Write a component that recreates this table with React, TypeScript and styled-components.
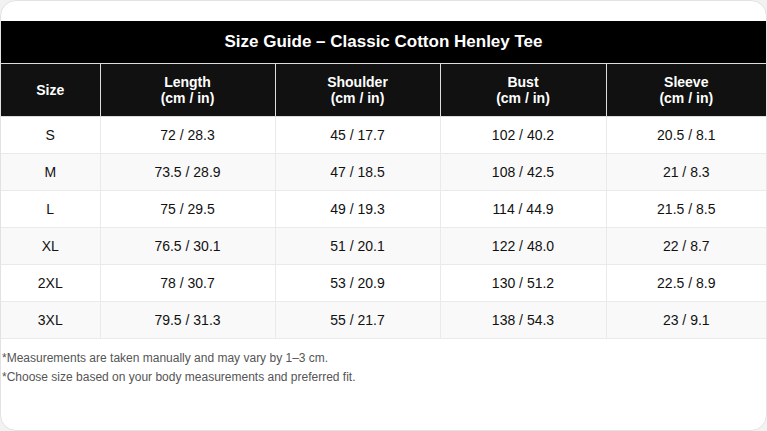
import React from 'react';
import styled, { createGlobalStyle } from 'styled-components';

const GlobalStyle = createGlobalStyle`
  html, body {
    margin: 0;
    padding: 0;
    background: #f2f2f2;
  }
  * {
    box-sizing: border-box;
  }
`;

type SizeRow = {
  size: string;
  length: string;
  shoulder: string;
  bust: string;
  sleeve: string;
};

const rows: SizeRow[] = [
  { size: 'S', length: '72 / 28.3', shoulder: '45 / 17.7', bust: '102 / 40.2', sleeve: '20.5 / 8.1' },
  { size: 'M', length: '73.5 / 28.9', shoulder: '47 / 18.5', bust: '108 / 42.5', sleeve: '21 / 8.3' },
  { size: 'L', length: '75 / 29.5', shoulder: '49 / 19.3', bust: '114 / 44.9', sleeve: '21.5 / 8.5' },
  { size: 'XL', length: '76.5 / 30.1', shoulder: '51 / 20.1', bust: '122 / 48.0', sleeve: '22 / 8.7' },
  { size: '2XL', length: '78 / 30.7', shoulder: '53 / 20.9', bust: '130 / 51.2', sleeve: '22.5 / 8.9' },
  { size: '3XL', length: '79.5 / 31.3', shoulder: '55 / 21.7', bust: '138 / 54.3', sleeve: '23 / 9.1' },
];

const columns = [
  { label: 'Size', unit: false, width: 99 },
  { label: 'Length', unit: true, width: 175 },
  { label: 'Shoulder', unit: true, width: 165 },
  { label: 'Bust', unit: true, width: 166 },
  { label: 'Sleeve', unit: true, width: 160 },
];

const Card = styled.div`
  width: 767px;
  height: 431px;
  background: #fff;
  border: 1px solid #e2e2e2;
  border-radius: 16px;
  padding: 20px 0 0;
  overflow: hidden;
  font-family: 'Liberation Sans', Arial, sans-serif;
`;

const Table = styled.table`
  width: 100%;
  border-collapse: collapse;
  table-layout: fixed;
`;

const Title = styled.th`
  background: #000;
  color: #fff;
  font-size: 17px;
  font-weight: bold;
  height: 42px;
  padding: 0 10px;
  text-align: center;
  border-bottom: 1px solid #ddd;
`;

const HeadCell = styled.th`
  background: #111;
  color: #fff;
  font-size: 14px;
  font-weight: bold;
  line-height: 16px;
  height: 53px;
  padding: 0 10px;
  text-align: center;
  border: 1px solid #ddd;
  border-top: none;
  &:first-child {
    border-left: none;
  }
  &:last-child {
    border-right: none;
  }
`;

const Row = styled.tr<{ $striped: boolean }>`
  background: ${(p) => (p.$striped ? '#f9f9f9' : '#fff')};
`;

const Cell = styled.td`
  color: #111;
  font-size: 14px;
  line-height: 16px;
  height: 37px;
  padding: 0 10px;
  text-align: center;
  border: 1px solid #eaeaea;
  &:first-child {
    border-left: none;
  }
  &:last-child {
    border-right: none;
  }
`;

const Notes = styled.div`
  padding: 11px 0 0 1px;
  display: flex;
  flex-direction: column;
  gap: 3px;
`;

const Note = styled.p`
  margin: 0;
  color: #555;
  font-size: 12px;
  line-height: 16px;
`;

const App = () => {
  return (
    <>
      <GlobalStyle />
      <Card>
        <Table>
          <colgroup>
            {columns.map((c) => (
              <col key={c.label} style={{ width: c.width }} />
            ))}
          </colgroup>
          <thead>
            <tr>
              <Title colSpan={5}>Size Guide – Classic Cotton Henley Tee</Title>
            </tr>
            <tr>
              {columns.map((c) => (
                <HeadCell key={c.label}>
                  {c.label}
                  {c.unit && (
                    <>
                      <br />
                      (cm / in)
                    </>
                  )}
                </HeadCell>
              ))}
            </tr>
          </thead>
          <tbody>
            {rows.map((r, i) => (
              <Row key={r.size} $striped={i % 2 === 1}>
                <Cell>{r.size}</Cell>
                <Cell>{r.length}</Cell>
                <Cell>{r.shoulder}</Cell>
                <Cell>{r.bust}</Cell>
                <Cell>{r.sleeve}</Cell>
              </Row>
            ))}
          </tbody>
        </Table>
        <Notes>
          <Note>*Measurements are taken manually and may vary by 1–3 cm.</Note>
          <Note>*Choose size based on your body measurements and preferred fit.</Note>
        </Notes>
      </Card>
    </>
  );
};

export default App;
